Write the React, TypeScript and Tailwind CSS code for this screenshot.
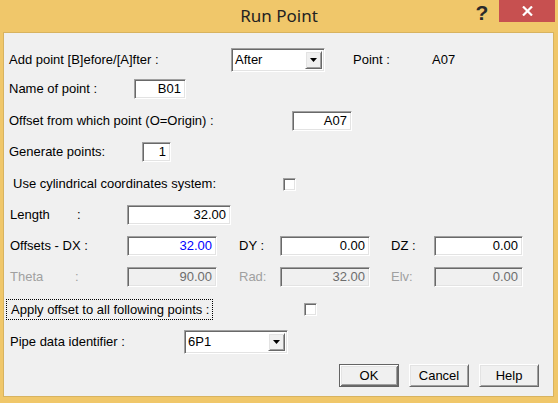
import React from "react";

const sunken =
  "border border-t-[#a0a0a0] border-l-[#a0a0a0] border-b-white border-r-white shadow-[inset_1px_1px_0_#696969,inset_-1px_-1px_0_#e3e3e3]";
const raised =
  "bg-[#f0f0f0] border border-t-white border-l-white border-b-[#696969] border-r-[#696969] shadow-[inset_1px_1px_0_#e3e3e3,inset_-1px_-1px_0_#a0a0a0]";

function Field({
  w,
  value,
  tone = "text-black",
  disabled = false,
}: {
  w: string;
  value: string;
  tone?: string;
  disabled?: boolean;
}) {
  return (
    <div
      className={`${w} h-full ${sunken} ${disabled ? "bg-[#f0f0f0]" : "bg-white"} flex items-center justify-end pr-[4px] ${tone}`}
    >
      {value}
    </div>
  );
}

function Check() {
  return <div className={`w-[13px] h-[13px] bg-white ${sunken}`} />;
}

function Combo({ w, value }: { w: string; value: string }) {
  return (
    <div className={`${w} h-full ${sunken} bg-white flex`}>
      <div className="flex-1 flex items-center pl-[3px]">{value}</div>
      <div className={`w-[17px] my-[2px] mr-[2px] ${raised} flex items-center justify-center`}>
        <svg width="7" height="4" viewBox="0 0 7 4">
          <path d="M0 0H7L3.5 4Z" fill="#000" />
        </svg>
      </div>
    </div>
  );
}

function Btn({ label, def = false }: { label: string; def?: boolean }) {
  if (def) {
    return (
      <div className="w-[60px] h-[23px] bg-[#f0f0f0] border border-[#646464] shadow-[inset_1px_1px_0_#fff,inset_-1px_-1px_0_#696969,inset_2px_2px_0_#e3e3e3,inset_-2px_-2px_0_#a0a0a0] flex items-center justify-center">
        {label}
      </div>
    );
  }
  return (
    <div className={`w-[60px] h-[23px] ${raised} flex items-center justify-center`}>
      {label}
    </div>
  );
}

export default function App() {
  return (
    <div className="w-[558px] h-[403px] bg-[#f0c76a] flex flex-col overflow-hidden font-['Liberation_Sans',Arial,sans-serif] text-[13px] text-black">
      {/* Title bar */}
      <div className="h-[32px] grid grid-cols-[1fr_auto_1fr] shrink-0">
        <div />
        <div className="flex items-center pb-[1px] font-['Noto_Sans',sans-serif] text-[17px] text-[#222]">
          Run Point
        </div>
        <div className="flex justify-end items-start pr-[3px]">
          <div className="w-[34px] h-[25px] flex items-start justify-center font-['Liberation_Sans',Arial,sans-serif] font-bold text-[21px] leading-[25px] text-[#2a2a2a]">
            ?
          </div>
          <div className="w-[56px] h-[22px] bg-[#c75050] flex items-center justify-center">
            <svg width="11" height="10" viewBox="0 0 11 10">
              <path d="M1 0.5L10 9.5M10 0.5L1 9.5" stroke="#fff" strokeWidth="2.2" />
            </svg>
          </div>
        </div>
      </div>

      {/* Client area */}
      <div className="ml-[3px] w-[551px] h-[365px] border border-[#d8b35f] bg-[#f0f0f0] flex flex-col">
        {/* Row 1 */}
        <div className="mt-[15px] h-[24px] flex items-center pl-[5px]">
          <div className="w-[222px]">Add point [B]efore/[A]fter :</div>
          <Combo w="w-[94px]" value="After" />
          <div className="ml-[28px] w-[79px]">Point :</div>
          <div>A07</div>
        </div>
        {/* Row 2 */}
        <div className="mt-[7px] h-[20px] flex items-center pl-[5px]">
          <div className="w-[125px]">Name of point :</div>
          <Field w="w-[52px]" value="B01" />
        </div>
        {/* Row 3 */}
        <div className="mt-[12px] h-[20px] flex items-center pl-[5px]">
          <div className="w-[283px]">Offset from which point (O=Origin) :</div>
          <Field w="w-[60px]" value="A07" />
        </div>
        {/* Row 4 */}
        <div className="mt-[11px] h-[20px] flex items-center pl-[5px]">
          <div className="w-[133px]">Generate points:</div>
          <Field w="w-[29px]" value="1" />
        </div>
        {/* Row 5 */}
        <div className="mt-[12px] h-[20px] flex items-center pl-[9px]">
          <div className="w-[270px]">Use cylindrical coordinates system:</div>
          <Check />
        </div>
        {/* Row 6 */}
        <div className="mt-[11px] h-[20px] flex items-center pl-[5px]">
          <div className="w-[118px] flex">
            <span className="w-[68px] pl-[1px]">Length</span>
            <span>:</span>
          </div>
          <Field w="w-[104px]" value="32.00" />
        </div>
        {/* Row 7 */}
        <div className="mt-[11px] h-[20px] flex items-center pl-[5px]">
          <div className="w-[118px] pl-[1px]">Offsets - DX :</div>
          <Field w="w-[90px]" value="32.00" tone="text-[#0000ff]" />
          <div className="ml-[22px] w-[41px]">DY :</div>
          <Field w="w-[90px]" value="0.00" />
          <div className="ml-[21px] w-[43px]">DZ :</div>
          <Field w="w-[89px]" value="0.00" />
        </div>
        {/* Row 8 */}
        <div className="mt-[11px] h-[20px] flex items-center pl-[5px] text-[#a0a0a0]">
          <div className="w-[118px] flex">
            <span className="w-[66px] pl-[1px]">Theta</span>
            <span>:</span>
          </div>
          <Field w="w-[90px]" value="90.00" tone="text-[#6d6d6d]" disabled />
          <div className="ml-[22px] w-[41px]">Rad:</div>
          <Field w="w-[90px]" value="32.00" tone="text-[#6d6d6d]" disabled />
          <div className="ml-[21px] w-[43px]">Elv:</div>
          <Field w="w-[89px]" value="0.00" tone="text-[#6d6d6d]" disabled />
        </div>
        {/* Row 9 */}
        <div className="mt-[12px] h-[21px] flex items-center pl-[2px]">
          <div className="w-[207px] h-full border border-dotted border-black flex items-center pl-[4px]">
            Apply offset to all following points :
          </div>
          <div className="ml-[91px]">
            <Check />
          </div>
        </div>
        {/* Row 10 */}
        <div className="mt-[10px] h-[24px] flex items-center pl-[5px]">
          <div className="w-[175px] pl-[1px]">Pipe data identifier :</div>
          <Combo w="w-[104px]" value="6P1" />
        </div>
        {/* Row 11 */}
        <div className="mt-[10px] h-[23px] flex items-center justify-end gap-[10px] pr-[14px]">
          <Btn label="OK" def />
          <Btn label="Cancel" />
          <Btn label="Help" />
        </div>
      </div>
    </div>
  );
}
